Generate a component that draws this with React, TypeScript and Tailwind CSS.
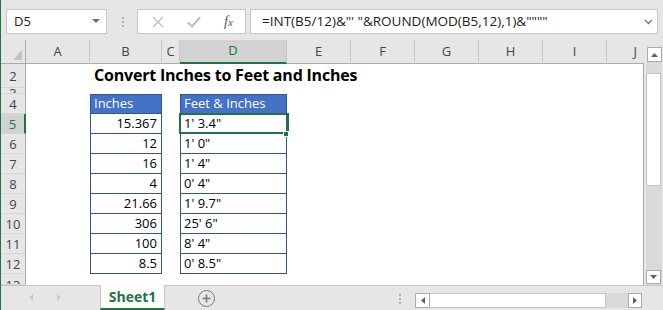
import React from 'react';

const inches = ['15.367', '12', '16', '4', '21.66', '306', '100', '8.5'];
const feet = [`1' 3.4"`, `1' 0"`, `1' 4"`, `0' 4"`, `1' 9.7"`, `25' 6"`, `8' 4"`, `0' 8.5"`];
const colLetters = ['A', 'B', 'C', 'D', 'E', 'F', 'G', 'H', 'I', 'J'];

const RowHead: React.FC<{ n: string; active?: boolean; clip?: string }> = ({ n, active, clip }) => (
  <div
    className={`flex justify-center overflow-hidden border-b border-[#d4d4d4] text-[13px] ${
      active
        ? 'bg-[#d2d2d2] text-[#217346] border-r-2 border-r-[#217346]'
        : 'bg-[#e6e6e6] text-[#444] border-r border-r-[#ababab]'
    } ${clip ?? 'items-center'}`}
  >
    <span className="leading-[20px]">{n}</span>
  </div>
);

const App: React.FC = () => {
  return (
    <div className="w-[663px] h-[310px] overflow-hidden bg-[#e6e6e6] border-l border-[#217346] flex flex-col font-['Open_Sans',sans-serif] text-black">
      {/* formula bar */}
      <div className="h-[40px] flex items-start pt-[9px] shrink-0">
        <div className="ml-[5px] w-[101px] h-[25px] bg-white border border-[#c6c6c6] flex items-center justify-between pl-[7px] pr-[6px] text-[13px] text-[#222]">
          <span>D5</span>
          <svg width="8" height="5" viewBox="0 0 8 5">
            <polygon points="0,0 8,0 4,4" fill="#6d6d6d" />
          </svg>
        </div>
        <div className="ml-[15px] mt-[8px] flex flex-col gap-[2px]">
          <div className="w-[2px] h-[2px] bg-[#b3b3b3]" />
          <div className="w-[2px] h-[2px] bg-[#b3b3b3]" />
          <div className="w-[2px] h-[2px] bg-[#b3b3b3]" />
        </div>
        <div className="ml-[13px] w-[109px] h-[25px] bg-white border border-[#c6c6c6] flex items-center">
          <svg width="12" height="12" viewBox="0 0 12 12" className="ml-[14px]">
            <path d="M1 1 L11 11 M11 1 L1 11" stroke="#bdbdbd" strokeWidth="1.3" />
          </svg>
          <svg width="14" height="12" viewBox="0 0 14 12" className="ml-[23px]">
            <path d="M1 6.5 L5 10.5 L13 1.5" stroke="#bdbdbd" strokeWidth="2" fill="none" />
          </svg>
          <span className="ml-[23px] font-['Liberation_Serif',serif] italic text-[14px] text-[#555] leading-none">
            f<span className="text-[11px]">x</span>
          </span>
        </div>
        <div className="ml-[4px] w-[408px] h-[25px] bg-white border border-[#c6c6c6] flex items-center justify-between pl-[11px] pr-[4px] text-[13.5px] text-[#222] whitespace-pre">
          <span>=INT(B5/12)&amp;"' "&amp;ROUND(MOD(B5,12),1)&amp;""""</span>
          <svg width="9" height="6" viewBox="0 0 9 6">
            <path d="M1 1 L4.5 4.5 L8 1" stroke="#777" strokeWidth="1.3" fill="none" />
          </svg>
        </div>
      </div>

      {/* sheet area */}
      <div className="h-[245px] flex shrink-0">
        <div className="relative grid grid-cols-[25px_64px_72px_18px_107px_64px_64px_64px_64px_64px_37px] grid-rows-[24px_24px_6px_repeat(9,20px)_11px] bg-white w-[643px]">
          {/* column headers */}
          <div className="bg-[#e6e6e6] border-r border-b border-[#ababab] flex items-end justify-end pr-[3px] pb-[3px]">
            <svg width="9" height="10" viewBox="0 0 9 10">
              <polygon points="9,0 9,10 0,10" fill="#c2c2c2" />
            </svg>
          </div>
          {colLetters.map((c) =>
            c === 'D' ? (
              <div
                key={c}
                className="bg-[#d2d2d2] border-r border-[#c8c8c8] border-b-2 border-b-[#217346] flex items-center justify-center text-[13px] text-[#217346]"
              >
                {c}
              </div>
            ) : (
              <div
                key={c}
                className={`bg-[#e6e6e6] border-b border-b-[#ababab] flex items-center text-[13px] text-[#444] ${
                  c === 'J' ? 'justify-end pr-[7px]' : 'justify-center border-r border-[#c8c8c8]'
                }`}
              >
                {c}
              </div>
            )
          )}

          {/* row 2 */}
          <RowHead n="2" />
          <div />
          <div className="col-span-9 flex items-end pl-[4px] pb-[2px] text-[16px] tracking-[-0.2px] font-bold leading-[22px] whitespace-nowrap border-r border-[#ababab]">
            Convert Inches to Feet and Inches
          </div>

          {/* row 3 */}
          <RowHead n="3" clip="items-start [&>span]:-mt-[5px]" />
          <div className="col-span-10 border-r border-[#ababab]" />

          {/* row 4 */}
          <RowHead n="4" />
          <div />
          <div className="bg-[#4472c4] border border-[#2f5597] text-white text-[13px] flex items-center pl-[3px]">
            Inches
          </div>
          <div />
          <div className="bg-[#4472c4] border border-[#2f5597] text-white text-[13px] flex items-center pl-[3px]">
            Feet &amp; Inches
          </div>
          <div className="col-span-6 border-r border-[#ababab]" />

          {/* rows 5-12 */}
          {inches.map((v, i) => (
            <React.Fragment key={i}>
              <RowHead n={String(i + 5)} active={i === 0} />
              <div />
              <div className="border-x border-b border-[#2f5597] text-[13px] flex items-center justify-end pr-[4px] pt-[1px]">
                {v}
              </div>
              <div />
              <div className="border-x border-b border-[#2f5597] text-[13px] flex items-center pl-[3px] pt-[1px]">
                {feet[i]}
              </div>
              <div className="col-span-6 border-r border-[#ababab]" />
            </React.Fragment>
          ))}

          {/* row 13 */}
          <RowHead n="13" clip="items-start [&>span]:mt-[1px]" />
          <div className="col-span-10 border-r border-[#ababab]" />

          {/* selection */}
          <div className="absolute left-[178px] top-[73px] w-[110px] h-[21px] border-2 border-[#217346]" />
          <div className="absolute left-[282px] top-[91px] w-[6px] h-[6px] bg-[#217346] border border-white" />
        </div>

        {/* vertical scrollbar */}
        <div className="w-[19px] flex flex-col items-end pr-[1px]">
          <div className="mt-[7px] w-[15px] h-[15px] bg-white border border-[#ababab] flex items-center justify-center">
            <svg width="7" height="4" viewBox="0 0 7 4">
              <polygon points="0,4 7,4 3.5,0" fill="#606060" />
            </svg>
          </div>
          <div className="w-[16px] flex-1 bg-[#dadada] flex flex-col pt-[11px] pb-[1px]">
            <div className="w-[15px] h-[113px] bg-white border border-[#c6c6c6]" />
            <div className="flex-1" />
            <div className="w-[15px] h-[14px] bg-white border border-[#ababab] flex items-center justify-center">
              <svg width="7" height="4" viewBox="0 0 7 4">
                <polygon points="0,0 7,0 3.5,4" fill="#606060" />
              </svg>
            </div>
          </div>
        </div>
      </div>

      {/* sheet tabs */}
      <div className="h-[25px] flex shrink-0">
        <div className="w-[99px] border-t border-[#c6c6c6] flex items-center pl-[28px] gap-[24px] pb-[1px]">
          <svg width="4" height="7" viewBox="0 0 4 7">
            <polygon points="4,0 4,7 0,3.5" fill="#c8c8c8" />
          </svg>
          <svg width="4" height="7" viewBox="0 0 4 7">
            <polygon points="0,0 0,7 4,3.5" fill="#c8c8c8" />
          </svg>
        </div>
        <div className="w-[65px] bg-white border-x border-[#c6c6c6] border-b-2 border-b-[#217346] flex items-center justify-center text-[14px] font-bold text-[#217346]">
          Sheet1
        </div>
        <div className="flex-1 border-t border-[#c6c6c6] flex items-start pt-[7px]">
          <div className="ml-[33px] w-[17px] h-[17px] rounded-full border-[1.5px] border-[#7a7a7a] flex items-center justify-center -mt-[3px]">
            <svg width="9" height="9" viewBox="0 0 9 9">
              <path d="M4.5 0.5 V8.5 M0.5 4.5 H8.5" stroke="#7a7a7a" strokeWidth="1.6" />
            </svg>
          </div>
          <div className="ml-[184px] mt-[1px] flex flex-col gap-[2px]">
            <div className="w-[2px] h-[2px] bg-[#b3b3b3]" />
            <div className="w-[2px] h-[2px] bg-[#b3b3b3]" />
            <div className="w-[2px] h-[2px] bg-[#b3b3b3]" />
          </div>
          <div className="ml-[14px] h-[15px] flex">
            <div className="w-[15px] bg-white border border-[#ababab] flex items-center justify-center">
              <svg width="4" height="7" viewBox="0 0 4 7">
                <polygon points="4,0 4,7 0,3.5" fill="#606060" />
              </svg>
            </div>
            <div className="w-[176px] bg-white border-y border-r border-[#c6c6c6]" />
            <div className="w-[22px] bg-[#dadada]" />
            <div className="w-[14px] bg-white border border-[#ababab] flex items-center justify-center">
              <svg width="4" height="7" viewBox="0 0 4 7">
                <polygon points="0,0 0,7 4,3.5" fill="#606060" />
              </svg>
            </div>
          </div>
        </div>
      </div>
    </div>
  );
};

export default App;
